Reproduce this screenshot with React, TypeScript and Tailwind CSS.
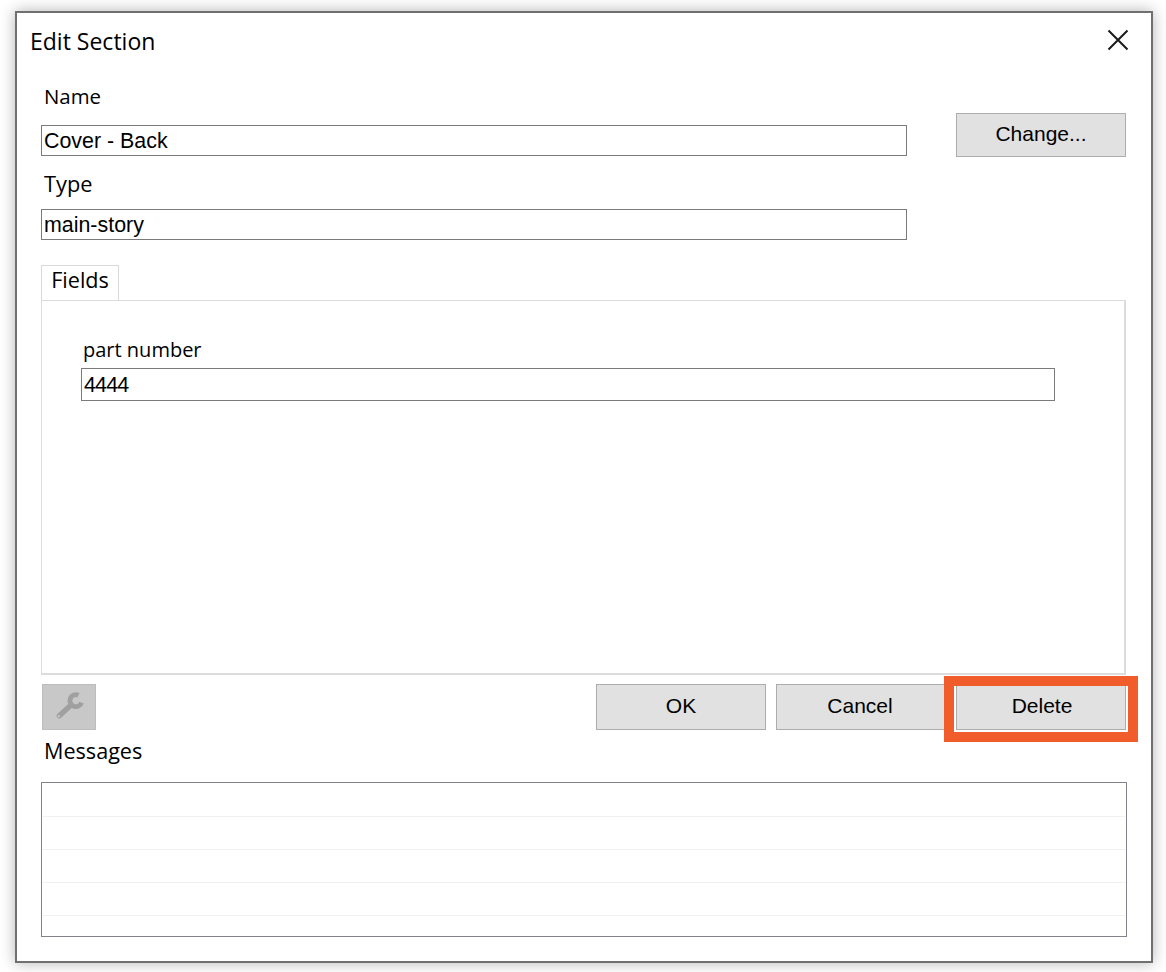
const labelFont = "font-['Open_Sans',sans-serif] text-[20px] text-black";
const fieldFont = "font-['Liberation_Sans',sans-serif] text-[21.4px] text-black";
const buttonFont = "font-['Liberation_Sans',sans-serif] text-[21px] text-black";

function GrayButton({ label, className = '' }: { label: string; className?: string }) {
  return (
    <button className={`flex h-[46px] w-[170px] items-center justify-center border border-[#adadad] bg-[#e1e1e1] pb-[2px] ${buttonFont} ${className}`}>
      {label}
    </button>
  );
}

function TextBox({ value, className = '' }: { value: string; className?: string }) {
  return (
    <div className={`flex items-center border border-[#7a7a7a] bg-white pl-[2px] pt-[2px] ${fieldFont} ${className}`}>
      {value}
    </div>
  );
}

export default function App() {
  return (
    <div className="h-[972px] w-[1166px] overflow-hidden bg-white pl-[15px] pt-[11px]">
      <div className="h-[952px] w-[1138px] border-2 border-[#707070] bg-white shadow-[0_0_14px_rgba(0,0,0,0.3)]">
        {/* Title bar */}
        <div className="flex h-[56px] items-start justify-between pl-[13px] pr-[22px]">
          <span className="mt-[11px] font-['Open_Sans',sans-serif] text-[23px] leading-[34px] text-black">Edit Section</span>
          <svg className="mt-[16px]" width="22" height="22" viewBox="0 0 22 22" fill="none" stroke="#1a1a1a" strokeWidth="2">
            <path d="M1.5 1.5 L20.5 20.5 M20.5 1.5 L1.5 20.5" />
          </svg>
        </div>

        {/* Name, type and change */}
        <div className="flex h-[196px] items-start pl-[24px]">
          <div className="w-[866px]">
            <div className={`h-[56px] pl-[3px] pt-[13px] leading-[28px] ${labelFont} !text-[20.4px]`}>Name</div>
            <TextBox value="Cover - Back" className="h-[31px]" />
            <div className={`h-[53px] pl-[3px] pt-[14px] leading-[28px] ${labelFont} !text-[21.8px]`}>Type</div>
            <TextBox value="main-story" className="h-[31px]" />
          </div>
          <GrayButton label="Change..." className="ml-[49px] mt-[44px] !h-[44px]" />
        </div>

        {/* Tab */}
        <div className="pl-[24px]">
          <div className={`flex h-[36px] w-[78px] items-center justify-center border border-b-0 border-[#d9d9d9] bg-white pb-[6px] ${labelFont} !text-[21.6px]`}>Fields</div>
          <div className="-mt-px h-[375px] w-[1085px] border border-r-2 border-b-2 border-[#dcdcdc] pl-[39px] pt-[35px]">
            <div className={`pl-[2px] leading-[28px] ${labelFont}`}>part number</div>
            <TextBox value="4444" className="mt-[4px] h-[33px] w-[974px] tracking-[-0.8px]" />
          </div>
        </div>

        {/* Action row */}
        <div className="flex items-start pl-[25px] pt-[9px]">
          <div className="flex h-[46px] w-[54px] items-center justify-center border border-[#bdbdbd] bg-[#c8c8c8]">
            <svg width="54" height="46" viewBox="0 0 54 46" fill="none">
              <path d="M17 32 L28 22" stroke="#a0a0a0" strokeWidth="5.5" strokeLinecap="round" />
              <path d="M40 18.5 A6.2 6.2 0 1 1 36.8 10.8" stroke="#a0a0a0" strokeWidth="5" />
              <circle cx="16.5" cy="32.5" r="1.2" fill="#c8c8c8" />
            </svg>
          </div>
          <GrayButton label="OK" className="ml-[500px]" />
          <GrayButton label="Cancel" className="ml-[10px] pr-[2px]" />
          <div className="relative ml-[10px]">
            <GrayButton label="Delete" className="pl-[2px]" />
            <div className="absolute bottom-[-12px] left-[-12px] right-[-12px] top-[-8px] border-[10px] border-[#f15d2a]" />
          </div>
        </div>

        {/* Messages */}
        <div className={`h-[52px] pl-[27px] pt-[6px] leading-[30px] ${labelFont} !text-[21.6px]`}>Messages</div>
        <div className="ml-[24px] h-[155px] w-[1086px] border border-[#82828c] bg-white px-[1px]">
          <div className="h-[34px] border-b border-[#f0f0f0]" />
          <div className="h-[33px] border-b border-[#f0f0f0]" />
          <div className="h-[33px] border-b border-[#f0f0f0]" />
          <div className="h-[33px] border-b border-[#f0f0f0]" />
        </div>
      </div>
    </div>
  );
}
